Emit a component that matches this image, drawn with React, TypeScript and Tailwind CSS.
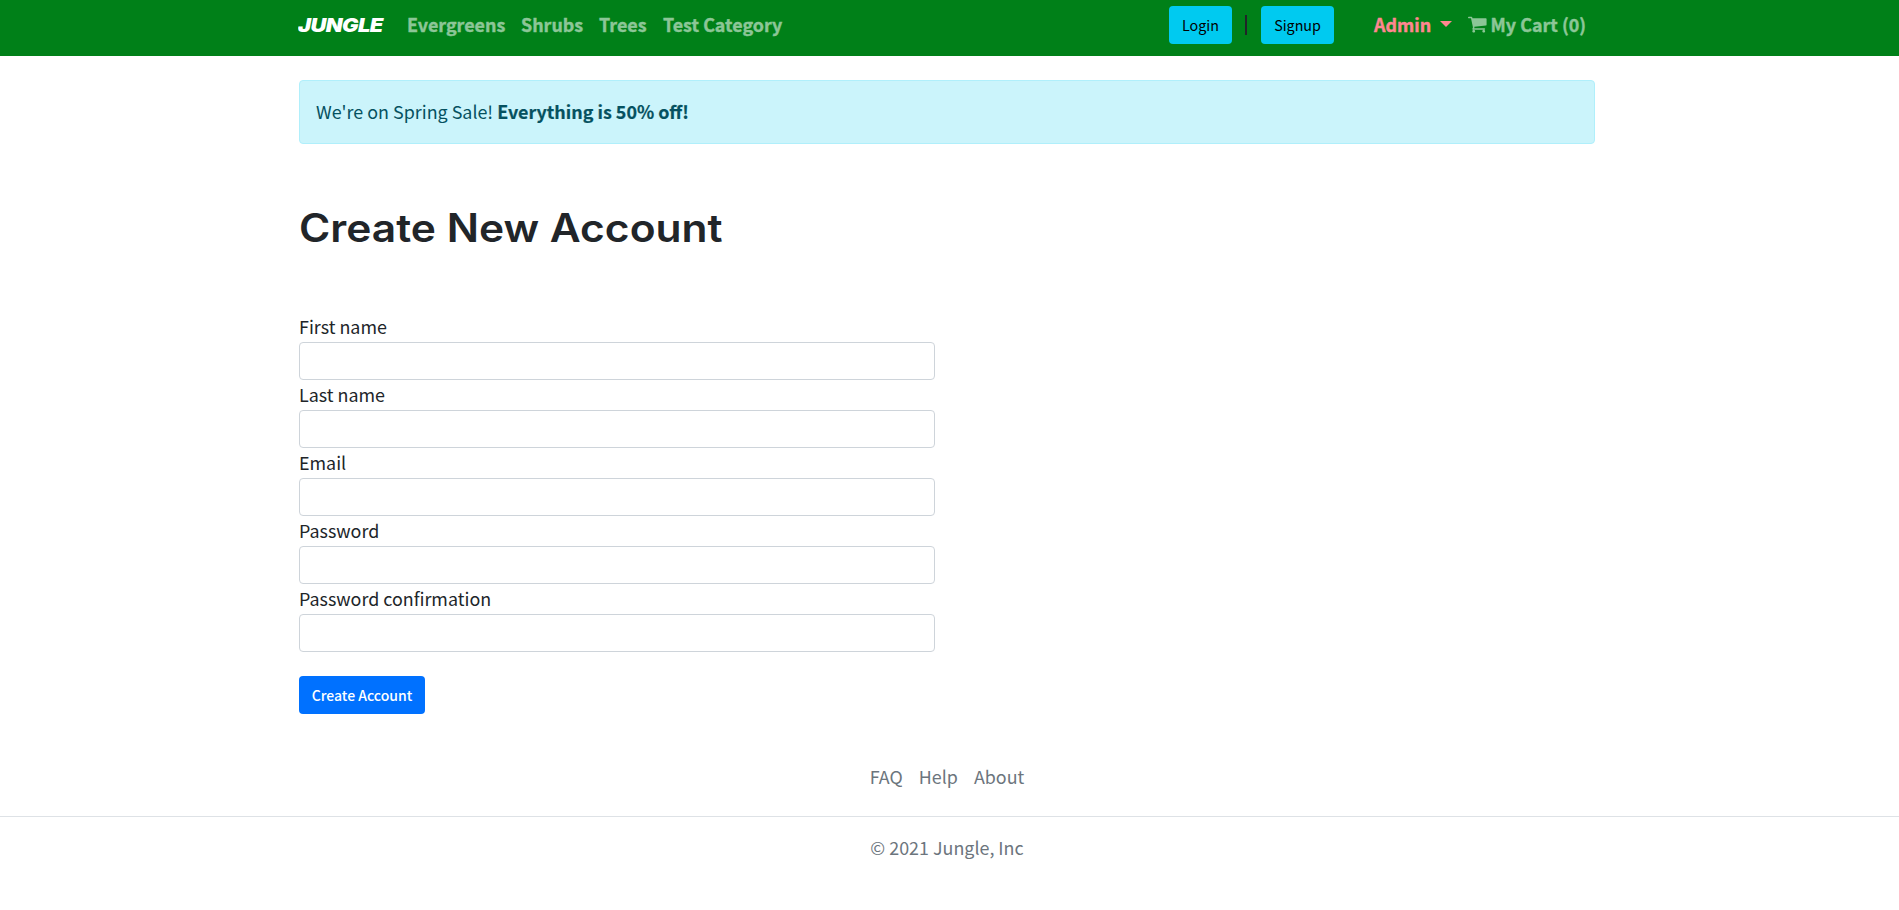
const categories = [
  { name: "Evergreens", className: "w-[98px]" },
  { name: "Shrubs", className: "w-[62px]" },
  { name: "Trees", className: "w-[48px]" },
  { name: "Test Category", className: "w-[120px]" },
];
const fields = ["First name", "Last name", "Email", "Password", "Password confirmation"];

function CartIcon() {
  return (
    <svg className="h-5 w-[18.6px]" viewBox="0 0 1664 1792" fill="currentColor">
      <path d="M640 1536q0 52-38 90t-90 38-90-38-38-90 38-90 90-38 90 38 38 90zm896 0q0 52-38 90t-90 38-90-38-38-90 38-90 90-38 90 38 38 90zm128-1088v512q0 24-16.5 42.5t-40.5 21.5l-1044 122q13 60 13 70 0 16-24 64h920q26 0 45 19t19 45-19 45-45 19h-1024q-26 0-45-19t-19-45q0-11 8-31.5t16-36 21.5-40 15.5-29.5l-177-823h-204q-26 0-45-19t-19-45 19-45 45-19h256q16 0 28.5 6.5t19.5 15.5 13 24.5 8 26 5.5 29.5 4.5 26h1201q26 0 45 19t19 45z" />
    </svg>
  );
}

export default function App() {
  return (
    <div className="min-h-screen bg-white font-['Noto_Sans_CJK_SC','Noto_Sans',sans-serif] text-[17.9px] leading-[28px] text-[#212529]">
      <nav className="h-14 bg-[#008018] pr-[5px]">
        <div className="mx-auto flex h-[50px] w-[1296px] items-center whitespace-nowrap font-bold">
          <a className="-ml-px w-[85px] origin-left scale-x-[1.14] font-[Inter,sans-serif] text-[19.2px] font-black italic tracking-[-0.5px] text-white">JUNGLE</a>
          <div className="ml-[24px] flex gap-4 pb-0.5 text-[#8cc697] [-webkit-text-stroke:0.4px]">
            {categories.map((c) => (
              <a key={c.name} className={c.className}>{c.name}</a>
            ))}
          </div>
          <div className="ml-auto flex items-center">
            <button className="h-[38px] w-[63px] rounded bg-[#00caf0] text-[14.3px] font-normal text-black">Login</button>
            <span className="ml-[13px] mr-[14px] h-5 w-[2px] bg-[#212529]" />
            <button className="h-[38px] w-[73px] rounded bg-[#00caf0] text-[14.3px] font-normal text-black">Signup</button>
            <a className="ml-10 flex w-[78px] items-center justify-between pb-0.5 text-[#ff8790] [-webkit-text-stroke:0.4px]">
              Admin
              <svg className="h-1.5 w-3" viewBox="0 0 12 6" fill="currentColor"><path d="M0 0h12L6 6z" /></svg>
            </a>
            <a className="mr-[9px] ml-4 flex items-center gap-1 pb-0.5 text-[#8cc697]">
              <CartIcon />
              <span className="[-webkit-text-stroke:0.4px]">My Cart (0)</span>
            </a>
          </div>
        </div>
      </nav>
      <main className="pt-6 pr-[5px]">
        <div className="mx-auto w-[1296px]">
          <div className="flex h-16 items-center rounded border border-[#b0effb] bg-[#cbf4fb] px-4 pb-0.5 text-[#055160]">
            <p>We're on Spring Sale! <b className="[-webkit-text-stroke:0.2px]">Everything is 50% off!</b></p>
          </div>
          <h1 className="mt-[60px] h-12 origin-left scale-x-[1.09] font-[Inter,sans-serif] text-[39px] leading-[48px] font-semibold">Create New Account</h1>
          <form className="mt-[60px]">
            {fields.map((f) => (
              <div key={f}>
                <label className="block h-[30px]">{f}</label>
                <input className="block h-[38px] w-[636px] rounded border border-[#ced4da] px-3" />
              </div>
            ))}
            <button type="button" className="mt-6 block h-[38px] w-[126px] rounded bg-[#0071ff] text-[14px] font-medium text-white">Create Account</button>
          </form>
        </div>
      </main>
      <footer className="mt-12 text-center text-[#6c757d]">
        <div className="flex h-[55px] justify-center gap-4 border-b border-[#dee2e6] pr-[5px]">
          <a>FAQ</a>
          <a>Help</a>
          <a>About</a>
        </div>
        <p className="mt-4 pr-[5px]">© 2021 Jungle, Inc</p>
      </footer>
    </div>
  );
}
